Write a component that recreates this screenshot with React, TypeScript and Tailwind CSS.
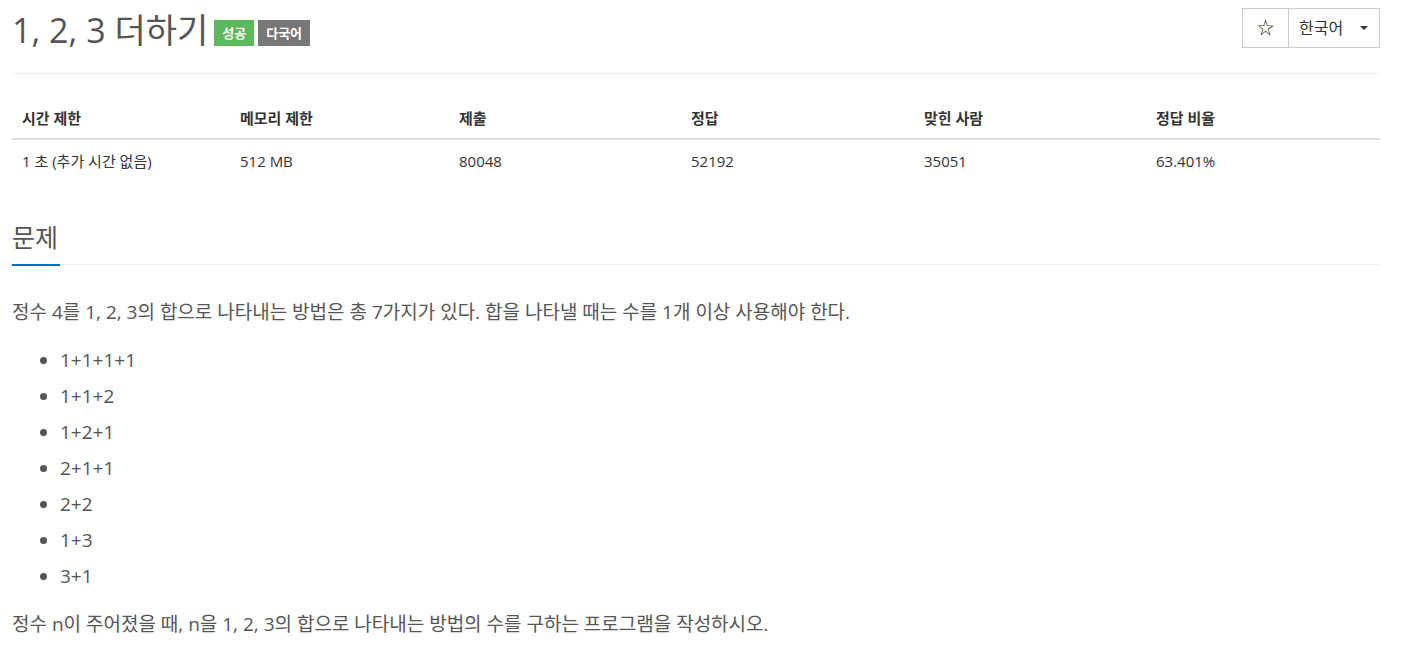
import * as React from 'react';

const FONT = "font-['Open_Sans','Noto_Sans_CJK_KR',sans-serif]";

const HEAD = ['시간 제한', '메모리 제한', '제출', '정답', '맞힌 사람', '정답 비율'];
const BODY = ['1 초 (추가 시간 없음)', '512 MB', '80048', '52192', '35051', '63.401%'];
const COL_W = ['w-[218px]', 'w-[219px]', 'w-[232px]', 'w-[233px]', 'w-[232px]', 'w-[234px]'];

const WAYS = ['1+1+1+1', '1+1+2', '1+2+1', '2+1+1', '2+2', '1+3', '3+1'];

export default function App() {
  return (
    <div className={`${FONT} bg-white min-h-screen pl-3 pr-[32px] text-[#333]`}>
      {/* title row */}
      <div className="flex items-start justify-between border-b border-[#eee] h-[74px]">
        <div className="flex items-center gap-[6px] pt-[9px]">
          <h1 className="text-[34px] leading-[42px] text-[#555] font-normal">1, 2, 3 더하기</h1>
          <div className="flex gap-1 mt-[6px]">
            <span className="bg-[#5cb85c] text-white text-[13px] font-bold leading-[26px] px-[8px]">성공</span>
            <span className="bg-[#777] text-white text-[13px] font-bold leading-[26px] px-[8px]">다국어</span>
          </div>
        </div>
        <div className="flex mt-[8px] border border-[#ccc] h-[40px] text-[16px]">
          <button className="w-[46px] flex items-center justify-center border-r border-[#ccc] text-[17px] text-[#222]">☆</button>
          <button className="w-[90px] flex items-center gap-[17px] pl-[10px]">
            <span>한국어</span>
            <span className="w-0 h-0 border-l-[4px] border-r-[4px] border-t-[4px] border-l-transparent border-r-transparent border-t-[#333]" />
          </button>
        </div>
      </div>

      {/* info table */}
      <div className="mt-[24px] text-[15px]">
        <div className="flex border-b-2 border-[#ddd] h-[42px] items-center font-bold">
          {HEAD.map((h, i) => (
            <div key={h} className={`${COL_W[i]} px-[10px]`}>{h}</div>
          ))}
        </div>
        <div className="flex h-[42px] items-center">
          {BODY.map((b, i) => (
            <div key={b} className={`${COL_W[i]} px-[10px]`}>{b}</div>
          ))}
        </div>
      </div>

      {/* problem section */}
      <div className="mt-[38px]">
        <div className="flex items-end">
          <h2 className="text-[25px] leading-[34px] text-[#555] pb-[10px] border-b-2 border-[#0076c0] w-[48px]">문제</h2>
          <div className="flex-1 border-b border-dotted border-[#ddd] mb-[1px]" />
        </div>
        <div className="text-[19px] text-[#555] mt-[28px]">
          <p className="leading-[36px] mb-[12px]">정수 4를 1, 2, 3의 합으로 나타내는 방법은 총 7가지가 있다. 합을 나타낼 때는 수를 1개 이상 사용해야 한다.</p>
          <ul className="list-disc pl-[48px] mb-[12px] marker:text-[#555]">
            {WAYS.map((w) => (
              <li key={w} className="leading-[36px]">{w}</li>
            ))}
          </ul>
          <p className="leading-[36px]">정수 n이 주어졌을 때, n을 1, 2, 3의 합으로 나타내는 방법의 수를 구하는 프로그램을 작성하시오.</p>
        </div>
      </div>
    </div>
  );
}
